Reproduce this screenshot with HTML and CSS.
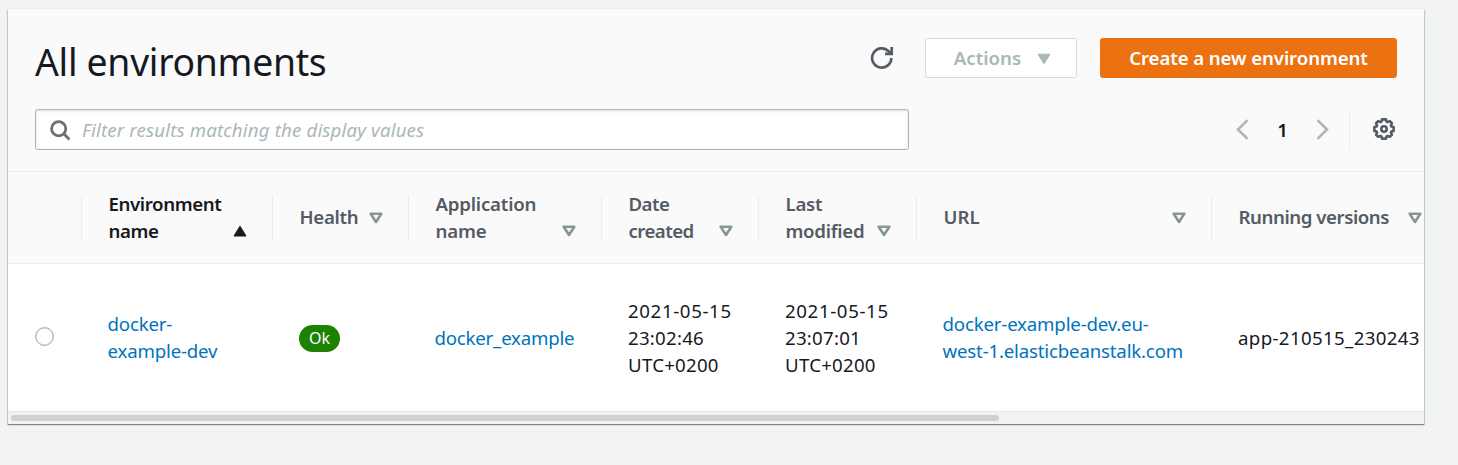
FILE: index.html
```html
<!DOCTYPE html>
<html lang="en">
<head>
<meta charset="utf-8">
<title>All environments</title>
<link rel="stylesheet" href="styles.css">
</head>
<body>
<svg class="defs" width="0" height="0" aria-hidden="true">
  <symbol id="sort" viewBox="0 0 14 12"><path d="M1.700 1.700h10.600L7 10z" fill="none" stroke="#879596" stroke-width="2.600" stroke-linejoin="round"/></symbol>
</svg>
<main class="card">
  <header class="top">
    <div class="title-row">
      <h1 class="title">All environments</h1>
      <div class="actions">
        <button class="icon-button" aria-label="Refresh"><svg width="24" height="24" viewBox="0 0 24 24" fill="none" stroke="#545b64" stroke-width="2.700"><path d="M21.300 12A9.600 9.600 0 1 1 18.600 5.300L21 7.400"/><path d="M21.700 1v6.800H15"/></svg></button>
        <button class="button disabled"><span class="t-actions">Actions</span><svg width="14" height="12" viewBox="0 0 14 12"><path d="M1 1.200h12L7 10.800z" fill="#aab7b8" stroke="#aab7b8" stroke-linejoin="round"/></svg></button>
        <button class="button primary"><span class="t-create">Create a new environment</span></button>
      </div>
    </div>
    <div class="filter-row">
      <div class="search">
        <svg width="21" height="21" viewBox="0 0 21 21" fill="none" stroke="#687078" stroke-width="2.800"><circle cx="8.700" cy="8.700" r="7.100"/><path d="M13.600 13.600l5.800 5.800"/></svg>
        <span class="placeholder">Filter results matching the display values</span>
      </div>
      <nav class="pager">
        <svg width="13" height="21" viewBox="0 0 13 21" fill="none" stroke="#aab7b8" stroke-width="2.500"><path d="M11.500 1.200L2 10.500l9.500 9.300"/></svg>
        <span class="page">1</span>
        <svg width="13" height="21" viewBox="0 0 13 21" fill="none" stroke="#aab7b8" stroke-width="2.500"><path d="M1.500 1.200L11 10.500 1.500 19.800"/></svg>
        <span class="rule"></span>
        <svg class="gear" width="22" height="22" viewBox="0 0 22 22" fill="none" stroke="#545b64" stroke-width="2.600" stroke-linejoin="round"><path d="M9 1.400h4l.6 2.200 1 .5 2.200-1 2.100 2.100-1 2.200.5 1 2.200.6v4l-2.200.6-.5 1 1 2.200-2.100 2.100-2.200-1-1 .5-.6 2.200H9l-.6-2.200-1-.5-2.200 1-2.100-2.100 1-2.200-.5-1-2.200-.6V9l2.200-.6.5-1-1-2.200 2.100-2.100 2.200 1 1-.5z"/><circle cx="11" cy="11" r="2.700"/></svg>
      </nav>
    </div>
  </header>
  <section class="grid head">
    <div class="th"></div>
    <div class="th sorted"><span class="t-env">Environment<br>name</span><svg width="14" height="12" viewBox="0 0 14 12"><path d="M1 11h12L7 1.200z" fill="#16191f" stroke="#16191f" stroke-linejoin="round"/></svg></div>
    <div class="th"><span class="t-health">Health</span><svg width="14" height="12"><use href="#sort"/></svg></div>
    <div class="th"><span class="t-app">Application<br>name</span><svg width="14" height="12"><use href="#sort"/></svg></div>
    <div class="th"><span class="t-date">Date<br>created</span><svg width="14" height="12"><use href="#sort"/></svg></div>
    <div class="th"><span class="t-last">Last<br>modified</span><svg width="14" height="12"><use href="#sort"/></svg></div>
    <div class="th"><span class="t-url">URL</span><svg width="14" height="12"><use href="#sort"/></svg></div>
    <div class="th"><span class="t-run">Running versions</span><svg width="14" height="12"><use href="#sort"/></svg></div>
  </section>
  <section class="grid row">
    <div class="td select"><span class="radio"></span></div>
    <div class="td link"><span class="b-env">docker-<br>example-dev</span></div>
    <div class="td"><span class="badge">Ok</span></div>
    <div class="td link"><span class="b-app">docker_example</span></div>
    <div class="td"><span class="b-date"><span class="day">2021-05-15</span><br>23:02:46<br>UTC+0200</span></div>
    <div class="td"><span class="b-date"><span class="day">2021-05-15</span><br>23:07:01<br>UTC+0200</span></div>
    <div class="td link"><span class="b-url">docker-example-dev.eu-<br>west-1.elasticbeanstalk.com</span></div>
    <div class="td"><span class="b-run">app-210515_230243</span></div>
  </section>
  <div class="scrollbar"><div class="thumb"></div></div>
</main>
</body>
</html>
```
FILE: styles.css
```css
* { box-sizing: border-box; }
body {
  margin: 0;
  padding: 9px 34px 0 8px;
  height: 465px;
  overflow: hidden;
  background: #f2f3f3;
  color: #16191f;
  font: 18.67px/27px "Noto Sans", sans-serif;
}
.defs { position: absolute; }
svg { display: block; flex: none; }
.card {
  height: 415px;
  overflow: hidden;
  background: #fff;
  box-shadow: 0 1px 1px 0 rgba(0, 28, 36, .3), 1px 1px 1px 0 rgba(0, 28, 36, .15), -1px 1px 1px 0 rgba(0, 28, 36, .15), 0 -1px 0 0 #eaeded;
}
.top {
  height: 163px;
  padding: 29px 27px 0;
  background: #fafafa;
  border-bottom: 1px solid #eaeded;
}
.title-row { display: flex; justify-content: space-between; height: 71px; }
.title { margin: 0; font-size: 37.33px; font-weight: 400; line-height: 48px; white-space: nowrap; letter-spacing: -.3px; }
.actions { display: flex; align-items: flex-start; }
.icon-button { margin: 8px 31px 0 0; padding: 0; border: 0; background: none; }
.button {
  display: flex;
  align-items: center;
  justify-content: center;
  height: 40px;
  padding: 0;
  border: 1px solid #d5dbdb;
  border-radius: 2.700px;
  background: #fff;
  font: 650 18.67px/27px "Noto Sans", sans-serif;
  white-space: nowrap;
}
.button span { margin-top: -2px; }
.t-create { letter-spacing: -.1px; }
.disabled { width: 152px; gap: 16px; margin-right: 23px; padding-left: 3px; color: #aab7b8; }
.disabled svg { margin-top: 1px; }
.primary { width: 297px; border-color: #ec7211; background: #ec7211; color: #fff; }
.filter-row { display: flex; justify-content: space-between; }
.search {
  display: flex;
  align-items: center;
  width: 874px;
  height: 41px;
  padding-left: 14px;
  border: 1px solid #aab7b8;
  border-radius: 2.700px;
  background: #fff;
  box-shadow: inset 0 1px 3px rgba(0, 28, 36, .14);
}
.search svg { margin-top: 1px; }
.placeholder { margin-left: 11px; color: #aab7b8; font-style: italic; white-space: nowrap; letter-spacing: .15px; }
.pager { display: flex; align-items: center; height: 40px; padding-right: 2px; }
.page { width: 67px; text-align: center; font-weight: 650; }
.rule { width: 1px; height: 39px; margin: 0 23px 0 20px; background: #eaeded; }
.gear { margin-top: -1px; }
.grid { display: grid; grid-template-columns: 74px 191px 136px 193px 157px 158px 295px 236px; white-space: nowrap; }
.head { height: 92px; padding: 23px 0; background: #fafafa; border-bottom: 1px solid #eaeded; }
.th {
  display: flex;
  align-items: center;
  justify-content: space-between;
  height: 45px;
  padding: 0 25px 0 26.500px;
  border-right: 1px solid #eaeded;
  color: #545b64;
  font-weight: 650;
}
.th span { margin-top: -2px; }
.th:has(br) svg { margin-top: 27px; }
.sorted { color: #16191f; }
.t-env { letter-spacing: -.4px; }
.t-health, .t-last { letter-spacing: -.3px; }
.t-app { letter-spacing: -.2px; }
.t-date { letter-spacing: -.55px; }
.t-run { letter-spacing: -.45px; }
.row { height: 147px; }
.td { display: flex; align-items: center; padding-left: 26px; }
.link { padding-left: 25.500px; color: #0073bb; }
.b-env, .b-url { margin-top: -2px; letter-spacing: -.18px; }
.b-app { letter-spacing: -.22px; }
.b-date { letter-spacing: .25px; }
.day { letter-spacing: .63px; }
.b-run { letter-spacing: .36px; }
.select { padding-left: 27px; }
.radio { width: 19px; height: 19px; margin-top: -2px; border: 1.500px solid #aab7b8; border-radius: 50%; box-shadow: inset 0 0 0 .5px #aab7b8; }
.badge {
  width: 41px;
  height: 27px;
  margin-top: 2px;
  border-radius: 13.500px;
  background: #1d8102;
  color: #fff;
  font-size: 16px;
  text-align: center;
}
.scrollbar { height: 13px; padding: 3px 3px; border-top: 1px solid #e8e8e8; background: #f2f2f2; }
.thumb { width: 988px; height: 6px; border-radius: 3px; background: #d0d0d0; }
```
